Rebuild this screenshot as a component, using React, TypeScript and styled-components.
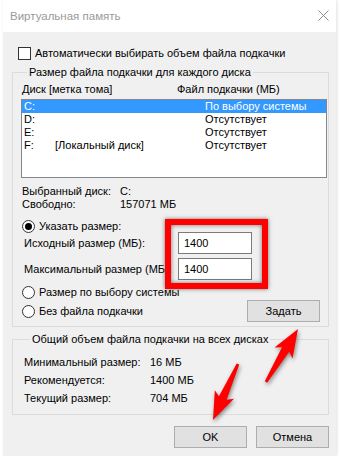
import React from "react"
import styled, { createGlobalStyle } from "styled-components"

const GlobalStyle = createGlobalStyle`
  html, body {
    margin: 0;
    padding: 0;
    background: #ffffff;
  }
  body {
    font-family: "Liberation Sans", Arial, sans-serif;
    font-size: 11px;
    color: #000;
    white-space: nowrap;
  }
`

const Window = styled.div`
  position: relative;
  width: 333px;
  height: 456px;
  margin-left: 3px;
  display: flex;
  flex-direction: column;
  box-shadow: 1px 0 3px rgba(0, 0, 0, 0.12);
`

const TitleBar = styled.div`
  height: 32px;
  flex: none;
  background: #ffffff;
  display: flex;
  align-items: center;
  justify-content: space-between;
  padding: 0 7px 0 7px;
  box-sizing: border-box;
`

const Title = styled.span`
  color: #9a9a9a;
  font-size: 11.5px;
  margin-top: -1px;
`

const CloseIcon = styled.svg`
  width: 11px;
  height: 11px;
  margin-top: -1px;
`

const Body = styled.div`
  flex: 1;
  background: #f0f0f0;
  display: flex;
  flex-direction: column;
  padding: 15px 7px 8px 9px;
  box-sizing: border-box;
`

const CheckRow = styled.label`
  display: flex;
  align-items: center;
  gap: 4px;
  height: 13px;
  line-height: 13px;
  padding-left: 6px;
`

const CheckBox = styled.span`
  width: 13px;
  height: 13px;
  box-sizing: border-box;
  border: 1px solid #333;
  background: #fff;
  flex: none;
`

const Group = styled.fieldset<{ $gap: number }>`
  margin: ${p => p.$gap}px 0 0 0;
  border: 1px solid #dcdcdc;
  min-width: 0;
`

const Legend = styled.legend`
  margin-left: 6px;
  padding: 0 2px;
  line-height: 14px;
`

const HeaderRow = styled.div`
  display: grid;
  grid-template-columns: 155px 1fr;
  line-height: 14px;
  padding-left: 1px;
`

const ListBox = styled.div`
  margin-top: 3px;
  height: 79px;
  box-sizing: border-box;
  border: 1px solid #828790;
  background: #fff;
`

const ListRow = styled.div<{ $selected?: boolean }>`
  display: grid;
  grid-template-columns: 31px 150px 1fr;
  height: 13px;
  line-height: 13px;
  padding-left: 2px;
  background: ${p => (p.$selected ? "#3399ff" : "transparent")};
  color: ${p => (p.$selected ? "#fff" : "#000")};
`

const InfoGrid = styled.div<{ $label: number; $row: number }>`
  display: grid;
  grid-template-columns: ${p => p.$label}px 1fr;
  grid-auto-rows: ${p => p.$row}px;
  align-items: center;
`

const RadioRow = styled.div`
  display: flex;
  align-items: center;
  gap: 4px;
  height: 14px;
  padding-left: 1px;
`

const Radio = styled.span<{ $checked?: boolean }>`
  width: 13px;
  height: 13px;
  box-sizing: border-box;
  border-radius: 50%;
  border: 1px solid #333;
  background: #fff;
  flex: none;
  display: flex;
  align-items: center;
  justify-content: center;
  &::after {
    content: "";
    width: 7px;
    height: 7px;
    border-radius: 50%;
    background: ${p => (p.$checked ? "#000" : "transparent")};
  }
`

const SizeBlock = styled.div`
  display: flex;
  margin-top: -1px;
`

const SizeLabels = styled.div`
  width: 157px;
  display: grid;
  grid-auto-rows: 22px;
  row-gap: 4px;
  align-items: center;
  padding-left: 3px;
  box-sizing: border-box;
`

const SizeInputs = styled.div`
  position: relative;
  display: grid;
  grid-auto-rows: 22px;
  row-gap: 4px;
  width: 74px;
`

const NumberBox = styled.div`
  border: 1px solid #7a7a7a;
  background: #fff;
  display: flex;
  align-items: center;
  padding-left: 5px;
`

const Highlight = styled.div`
  position: absolute;
  top: -13px;
  left: -13px;
  right: -16px;
  bottom: -9px;
  border: 6px solid #ff0000;
  box-shadow: 0 0 4px rgba(0, 0, 0, 0.55), inset 0 0 4px rgba(0, 0, 0, 0.55);
  pointer-events: none;
`

const LowerRow = styled.div`
  display: flex;
  justify-content: space-between;
  align-items: flex-end;
  margin-top: 5px;
`

const RadioStack = styled.div`
  display: flex;
  flex-direction: column;
  gap: 5px;
`

const Button = styled.div<{ $width: number }>`
  width: ${p => p.$width}px;
  height: 22px;
  box-sizing: border-box;
  border: 1px solid #adadad;
  background: #e1e1e1;
  display: flex;
  align-items: center;
  justify-content: center;
`

const ButtonBar = styled.div`
  display: flex;
  justify-content: flex-end;
  gap: 9px;
  margin-top: auto;
`

const Arrows = styled.svg`
  position: absolute;
  left: 0;
  top: 0;
  width: 333px;
  height: 456px;
  pointer-events: none;
  filter: drop-shadow(1px 2px 2px rgba(0, 0, 0, 0.45));
`

const arrowShape = (len: number) =>
  `0,-1.4 ${len - 24},-4.2 ${len - 28},-10.5 ${len},0 ${len - 28},10.5 ${len - 24},4.2 0,1.4`

const Arrow: React.FC<{ x1: number; y1: number; x2: number; y2: number }> = ({ x1, y1, x2, y2 }) => {
  const len = Math.hypot(x2 - x1, y2 - y1)
  const angle = (Math.atan2(y2 - y1, x2 - x1) * 180) / Math.PI
  return (
    <polygon
      points={arrowShape(len)}
      fill="#ff0000"
      transform={`translate(${x1 - 3} ${y1}) rotate(${angle})`}
    />
  )
}

const disks = [
  { letter: "C:", label: "", size: "По выбору системы" },
  { letter: "D:", label: "", size: "Отсутствует" },
  { letter: "E:", label: "", size: "Отсутствует" },
  { letter: "F:", label: "[Локальный диск]", size: "Отсутствует" },
]

const App: React.FC = () => {
  return (
    <>
      <GlobalStyle />
      <Window>
        <TitleBar>
          <Title>Виртуальная память</Title>
          <CloseIcon viewBox="0 0 11 11">
            <path d="M0.5 0.5 L10.5 10.5 M10.5 0.5 L0.5 10.5" stroke="#8a8a8a" strokeWidth="1" />
          </CloseIcon>
        </TitleBar>
        <Body>
          <CheckRow>
            <CheckBox />
            Автоматически выбирать объем файла подкачки
          </CheckRow>

          <Group $gap={5} style={{ padding: "3px 1px 8px 8px" }}>
            <Legend>Размер файла подкачки для каждого диска</Legend>
            <HeaderRow>
              <span>Диск [метка тома]</span>
              <span>Файл подкачки (МБ)</span>
            </HeaderRow>
            <ListBox>
              {disks.map((d, i) => (
                <ListRow key={d.letter} $selected={i === 0}>
                  <span>{d.letter}</span>
                  <span>{d.label}</span>
                  <span>{d.size}</span>
                </ListRow>
              ))}
            </ListBox>

            <InfoGrid $label={98} $row={13} style={{ marginTop: 6, paddingLeft: 1 }}>
              <span>Выбранный диск:</span>
              <span>C:</span>
              <span>Свободно:</span>
              <span>157071 МБ</span>
            </InfoGrid>

            <RadioRow style={{ marginTop: 9 }}>
              <Radio $checked />
              Указать размер:
            </RadioRow>

            <SizeBlock>
              <SizeLabels>
                <span>Исходный размер (МБ):</span>
                <span>Максимальный размер (МБ):</span>
              </SizeLabels>
              <SizeInputs>
                <NumberBox>1400</NumberBox>
                <NumberBox>1400</NumberBox>
                <Highlight />
              </SizeInputs>
            </SizeBlock>

            <LowerRow>
              <RadioStack>
                <RadioRow>
                  <Radio />
                  Размер по выбору системы
                </RadioRow>
                <RadioRow>
                  <Radio />
                  Без файла подкачки
                </RadioRow>
              </RadioStack>
              <Button $width={73} style={{ marginRight: 7, marginBottom: -4 }}>
                Задать
              </Button>
            </LowerRow>
          </Group>

          <Group $gap={5} style={{ padding: "7px 1px 7px 11px" }}>
            <Legend>Общий объем файла подкачки на всех дисках</Legend>
            <InfoGrid $label={126} $row={18}>
              <span>Минимальный размер:</span>
              <span>16 МБ</span>
              <span>Рекомендуется:</span>
              <span>1400 МБ</span>
              <span>Текущий размер:</span>
              <span>704 МБ</span>
            </InfoGrid>
          </Group>

          <ButtonBar>
            <Button $width={73}>OK</Button>
            <Button $width={73}>Отмена</Button>
          </ButtonBar>
        </Body>

        <Arrows viewBox="0 0 333 456">
          <Arrow x1={266} y1={382} x2={298} y2={329} />
          <Arrow x1={238} y1={364} x2={213} y2={420} />
        </Arrows>
      </Window>
    </>
  )
}

export default App
